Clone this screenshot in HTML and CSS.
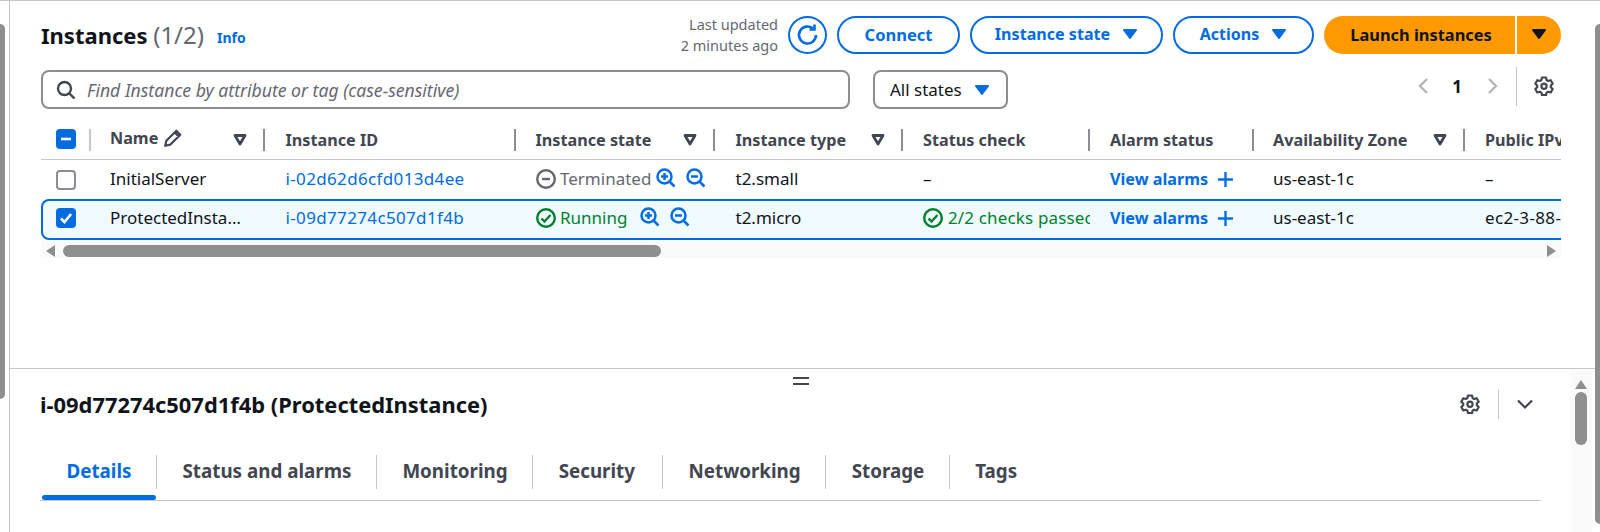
FILE: index.html
```html
<!DOCTYPE html>
<html>
<head>
  <title>Instances</title>
  <link rel="stylesheet" href="styles.css">
</head>
<body>
  <svg class="sprite" width="0" height="0">
    <symbol id="caret" viewBox="0 0 16 16"><path d="M2 4h12L8 12z" fill="currentColor" stroke="currentColor" stroke-width="2" stroke-linejoin="round"/></symbol>
    <symbol id="filter" viewBox="0 0 16 16"><path d="M3 3.5h10L8 12z" fill="none" stroke="currentColor" stroke-width="2.8" stroke-linejoin="round"/></symbol>
    <symbol id="zoom-in" viewBox="0 0 20 20" fill="none" stroke="currentColor" stroke-width="2.5"><circle cx="8.5" cy="8.5" r="7"/><path d="M13.5 13.5l5 5M5 8.5h7M8.5 5v7"/></symbol>
    <symbol id="zoom-out" viewBox="0 0 20 20" fill="none" stroke="currentColor" stroke-width="2.5"><circle cx="8.5" cy="8.5" r="7"/><path d="M13.5 13.5l5 5M5 8.5h7"/></symbol>
    <symbol id="ok" viewBox="0 0 20 20" fill="none" stroke="currentColor" stroke-width="2.4"><circle cx="10" cy="10" r="8.8"/><path d="M5.5 10.5l3 3 6-6.5"/></symbol>
    <symbol id="stopped" viewBox="0 0 20 20" fill="none" stroke="currentColor" stroke-width="2.4"><circle cx="10" cy="10" r="8.8"/><path d="M6 10h8"/></symbol>
    <symbol id="gear" viewBox="0 0 20 20" fill="none" stroke="currentColor" stroke-width="2.2" stroke-linejoin="round"><path d="M8 1.5h4l.6 2.6 1.5.9 2.6-.8 2 3.5-1.9 1.8v1.7l1.9 1.8-2 3.5-2.6-.8-1.5.9-.6 2.6H8l-.6-2.6-1.5-.9-2.6.8-2-3.5 1.9-1.8V9.5L1.3 7.7l2-3.5 2.6.8 1.5-.9z"/><circle cx="10" cy="10.3" r="2.6"/></symbol>
  </svg>

  <div class="layout">
    <div class="scroll-left"><div class="thumb-left"></div></div>

    <div class="main">
      <div class="instances">
        <div class="toolbar">
          <h1 class="title">Instances <span class="count">(1/2)</span></h1>
          <a class="info">Info</a>
          <div class="updated">Last updated<br>2 minutes ago</div>
          <button class="btn btn-icon">
            <svg width="24" height="24" viewBox="0 0 24 24" fill="none" stroke="currentColor" stroke-width="2.6"><path d="M20 12a8.5 8.5 0 1 1-3-6.5"/><path d="M18.5 1.5v5h-5"/></svg>
          </button>
          <button class="btn btn-connect">Connect</button>
          <button class="btn btn-state">Instance state <svg class="caret" width="16" height="16"><use href="#caret"/></svg></button>
          <button class="btn btn-actions">Actions <svg class="caret" width="16" height="16"><use href="#caret"/></svg></button>
          <div class="launch">
            <button class="launch-main">Launch instances</button>
            <button class="launch-more"><svg width="16" height="16"><use href="#caret"/></svg></button>
          </div>
        </div>

        <div class="filters">
          <div class="search">
            <svg width="20" height="20" viewBox="0 0 20 20" fill="none" stroke="currentColor" stroke-width="2.4"><circle cx="8.5" cy="8.5" r="6.5"/><path d="M13.3 13.3l5.2 5.2"/></svg>
            <span>Find Instance by attribute or tag (case-sensitive)</span>
          </div>
          <div class="state-select">All states <svg class="caret" width="16" height="16"><use href="#caret"/></svg></div>
          <div class="pager">
            <svg width="12" height="18" viewBox="0 0 12 18" fill="none" stroke="currentColor" stroke-width="2.4"><path d="M10 2L3 9l7 7"/></svg>
            <span class="page-num">1</span>
            <svg width="12" height="18" viewBox="0 0 12 18" fill="none" stroke="currentColor" stroke-width="2.4"><path d="M2 2l7 7-7 7"/></svg>
            <div class="pager-sep"></div>
            <svg class="pager-gear" width="20" height="20"><use href="#gear"/></svg>
          </div>
        </div>

        <div class="table">
          <div class="row row-head">
            <div class="cell cell-check"><span class="check check-on">
              <svg width="20" height="20" viewBox="0 0 20 20"><path d="M5 10h10" stroke="#fff" stroke-width="2.6"/></svg></span><i class="sep sep-light"></i></div>
            <div class="cell"><span class="name-head">Name <svg width="20" height="20" viewBox="0 0 18 18" fill="none" stroke="currentColor" stroke-width="2" stroke-linejoin="round"><path d="M2 16l1-4.5L12 2.5l3.5 3.5-9 9zM10.5 4l3.5 3.5"/></svg></span><svg class="filter" width="16" height="16"><use href="#filter"/></svg><i class="sep"></i></div>
            <div class="cell">Instance ID<i class="sep"></i></div>
            <div class="cell">Instance state<svg class="filter" width="16" height="16"><use href="#filter"/></svg><i class="sep"></i></div>
            <div class="cell">Instance type<svg class="filter" width="16" height="16"><use href="#filter"/></svg><i class="sep"></i></div>
            <div class="cell">Status check<i class="sep"></i></div>
            <div class="cell">Alarm status<i class="sep"></i></div>
            <div class="cell">Availability Zone<svg class="filter" width="16" height="16"><use href="#filter"/></svg><i class="sep"></i></div>
            <div class="cell">Public IPv4 DNS</div>
          </div>

          <div class="row row-body row-first">
            <div class="cell cell-check"><span class="check"></span></div>
            <div class="cell">InitialServer</div>
            <div class="cell"><a class="link">i-02d62d6cfd013d4ee</a></div>
            <div class="cell status-off">
              <svg class="status-icon" width="20" height="20"><use href="#stopped"/></svg>Terminated
              <svg class="zoom zoom-tight" width="20" height="20"><use href="#zoom-in"/></svg><svg class="zoom" width="20" height="20"><use href="#zoom-out"/></svg>
            </div>
            <div class="cell">t2.small</div>
            <div class="cell">–</div>
            <div class="cell"><a class="alarms">View alarms <svg width="17" height="17" viewBox="0 0 16 16" stroke="currentColor" stroke-width="2.2"><path d="M8 1v14M1 8h14"/></svg></a></div>
            <div class="cell">us-east-1c</div>
            <div class="cell">–</div>
          </div>

          <div class="row row-body row-selected">
            <div class="cell cell-check"><span class="check check-on">
              <svg width="20" height="20" viewBox="0 0 20 20" fill="none"><path d="M5 10.5l3.5 3.5 6.5-8" stroke="#fff" stroke-width="2.6"/></svg></span></div>
            <div class="cell"><span class="truncate">ProtectedInstance</span></div>
            <div class="cell"><a class="link">i-09d77274c507d1f4b</a></div>
            <div class="cell status-ok">
              <svg class="status-icon" width="20" height="20"><use href="#ok"/></svg>Running
              <svg class="zoom zoom-wide" width="20" height="20"><use href="#zoom-in"/></svg><svg class="zoom" width="20" height="20"><use href="#zoom-out"/></svg>
            </div>
            <div class="cell">t2.micro</div>
            <div class="cell status-ok cell-clip">
              <svg class="status-icon" width="20" height="20"><use href="#ok"/></svg>2/2 checks passed
            </div>
            <div class="cell"><a class="alarms">View alarms <svg width="17" height="17" viewBox="0 0 16 16" stroke="currentColor" stroke-width="2.2"><path d="M8 1v14M1 8h14"/></svg></a></div>
            <div class="cell">us-east-1c</div>
            <div class="cell dns">ec2-3-88-101-42.compute-1.amazonaws.com</div>
          </div>
        </div>

        <div class="hscroll">
          <span class="arrow-left"></span>
          <div class="hscroll-thumb"></div>
          <span class="arrow-right"></span>
        </div>
      </div>

      <div class="details">
        <div class="details-body">
          <div class="grip"></div>
          <div class="details-head">
            <h2 class="details-title">i-09d77274c507d1f4b (ProtectedInstance)</h2>
            <svg class="details-gear" width="20" height="20"><use href="#gear"/></svg>
            <div class="details-sep"></div>
            <svg class="details-chevron" width="18" height="18" viewBox="0 0 18 18" fill="none" stroke="currentColor" stroke-width="2.2"><path d="M2 5.5l7 7 7-7"/></svg>
          </div>
          <div class="tabs">
            <div class="tab tab-active">Details</div>
            <div class="tab">Status and alarms</div>
            <div class="tab">Monitoring</div>
            <div class="tab tab-wide">Security</div>
            <div class="tab">Networking</div>
            <div class="tab">Storage</div>
            <div class="tab tab-last">Tags</div>
          </div>
        </div>
        <div class="details-scroll">
          <span class="arrow-up"></span>
          <div class="details-thumb"></div>
        </div>
      </div>
    </div>

    <div class="scroll-right"><div class="thumb-right"></div></div>
  </div>
</body>
</html>
```

FILE: styles.css
```css
* {
  box-sizing: border-box;
}

html, body {
  margin: 0;
  height: 100%;
  overflow: hidden;
}

body {
  font-family: "Noto Sans", sans-serif;
  font-size: 17px;
  color: #0f141a;
  background: #fff;
}

.sprite {
  display: block;
  height: 0;
}

.layout {
  display: flex;
  height: 532px;
  border-top: 1px solid #c6c6cd;
}

/* page scrollbars */
.scroll-left {
  width: 10px;
  padding-top: 23px;
  border-right: 1px solid #c6c6cd;
}

.thumb-left {
  width: 5px;
  height: 375px;
  background: #8f8f8f;
  border-radius: 0 5px 5px 0;
}

.scroll-right {
  width: 5px;
  padding-top: 23px;
}

.thumb-right {
  height: 500px;
  background: #8f8f8f;
  border-radius: 5px 0 0 5px;
}

.main {
  flex: 1;
  min-width: 0;
}

/* top panel */
.instances {
  height: 368px;
  padding: 15px 34px 0 31px;
  border-bottom: 1px solid #c6c6cd;
}

.toolbar {
  display: flex;
  align-items: center;
  height: 38px;
}

.title {
  margin: 0 0 2px;
  font-size: 22px;
  font-weight: 700;
}

.count {
  font-size: 24px;
  font-weight: 400;
  color: #656871;
}

.info {
  margin: 5px 0 0 13px;
  font-size: 14px;
  font-weight: 700;
  color: #006ce0;
}

.updated {
  margin-left: auto;
  font-size: 14.5px;
  line-height: 21px;
  text-align: right;
  color: #656871;
}

.btn {
  display: flex;
  align-items: center;
  justify-content: center;
  gap: 12px;
  height: 38px;
  margin-left: 10px;
  padding: 0 0 2px;
  border: 2px solid #006ce0;
  border-radius: 20px;
  background: #fff;
  font: 700 16.5px "Noto Sans", sans-serif;
  color: #006ce0;
}

.btn-icon {
  width: 39px;
  margin-left: 10px;
  padding: 0;
  border-radius: 50%;
}

.btn-connect {
  width: 123px;
}

.btn-state {
  width: 193px;
  font-size: 16.1px;
}

.btn-actions {
  width: 141px;
  font-size: 16px;
}

.launch {
  display: flex;
  gap: 2px;
  height: 38px;
  margin-left: 10px;
}

.launch button {
  border: 0;
  padding: 0 0 2px;
  background: #f90;
  font: 700 16.4px "Noto Sans", sans-serif;
  color: #0f141a;
}

.launch-main {
  width: 191px;
  border-radius: 20px 0 0 20px;
  text-indent: 3px;
}

.launch-more {
  display: flex;
  align-items: center;
  justify-content: center;
  width: 44px;
  border-radius: 0 20px 20px 0;
}

.caret {
  color: #006ce0;
}

/* filter row */
.filters {
  display: flex;
  align-items: center;
  margin-top: 16px;
}

.search {
  display: flex;
  align-items: center;
  gap: 11px;
  width: 809px;
  height: 39px;
  padding-left: 13px;
  border: 2px solid #8c8c94;
  border-radius: 8px;
  font-size: 17.6px;
  font-style: italic;
  color: #656871;
}

.search svg {
  color: #424650;
}

.state-select {
  display: flex;
  align-items: center;
  gap: 12px;
  width: 135px;
  height: 39px;
  margin-left: 23px;
  padding-left: 15px;
  border: 2px solid #8c8c94;
  border-radius: 8px;
}

.pager {
  display: flex;
  align-items: center;
  margin-left: auto;
  margin-right: 7px;
  margin-top: -7px;
  color: #b4b4bb;
}

.page-num {
  width: 58px;
  padding-right: 2px;
  text-align: center;
  font-weight: 700;
  color: #0f141a;
}

.pager-sep {
  width: 1px;
  height: 39px;
  margin: 0 17px 0 17px;
  background: #c6c6cd;
}

.pager-gear {
  color: #424650;
}

/* table */
.table {
  width: 1520px;
  margin-top: 11px;
  overflow: hidden;
}

.row {
  display: grid;
  grid-template-columns: 50px 174px 251px 199px 188px 187px 164px 211px 400px;
  width: 1624px;
  align-items: center;
}

.row-head {
  height: 40px;
  border-bottom: 1px solid #c6c6cd;
  font-size: 16.2px;
  font-weight: 700;
  color: #424650;
}

.row-head .check {
  margin-bottom: 2px;
}

.row-first {
  height: 39px;
  padding-bottom: 3px;
}

.row-first .check {
  margin-top: 3px;
}

.row-selected {
  height: 41px;
  padding-bottom: 5px;
  background: #f0fbff;
  border-radius: 8px;
  box-shadow: inset 0 0 0 2px #006ce0;
}

.row-selected .check {
  margin-top: 2px;
}

.cell {
  display: flex;
  align-items: center;
  min-width: 0;
  padding-left: 20px;
  white-space: nowrap;
}

.cell:nth-child(2) {
  padding-left: 19px;
}

.cell:nth-child(3), .cell:nth-child(5) {
  padding-left: 20.5px;
}

.cell:nth-child(4) {
  padding-left: 19.5px;
}

.cell:nth-child(8) {
  padding-left: 19px;
}

.cell-check {
  padding-left: 15px;
}

.check {
  display: block;
  width: 20px;
  height: 20px;
  border: 2px solid #8c8c94;
  border-radius: 4px;
  background: #fff;
}

.check-on {
  border: 0;
  background: #006ce0;
}

.check svg {
  display: block;
}

.sep {
  width: 2px;
  height: 22px;
  margin-left: auto;
  background: #8c8c94;
}

.sep-light {
  background: #c6c6cd;
}

.filter {
  margin-left: auto;
  margin-right: 15px;
}

.filter + .sep {
  margin-left: 0;
}

.name-head {
  display: flex;
  align-items: center;
  gap: 5px;
  margin-top: -4px;
}

.link {
  letter-spacing: .35px;
  color: #006ce0;
}

.dns {
  letter-spacing: .35px;
}

.truncate {
  width: 136px;
  overflow: hidden;
  text-overflow: ellipsis;
}

.status-icon {
  flex: none;
  margin-top: 2px;
  margin-right: 4.5px;
}

.status-off {
  color: #656871;
}

.status-ok {
  color: #00802f;
}

.zoom {
  flex: none;
  margin-left: 10px;
  margin-top: -1px;
  color: #006ce0;
}

.zoom-tight {
  margin-left: 5px;
}

.zoom-wide {
  margin-left: 13px;
}

.cell-clip {
  overflow: hidden;
  letter-spacing: .15px;
}

.cell-clip .status-icon {
  margin-right: 5px;
}

.alarms {
  display: flex;
  align-items: center;
  gap: 9px;
  margin-top: 2px;
  font-size: 16.2px;
  font-weight: 700;
  color: #006ce0;
}

/* horizontal scrollbar under the table */
.hscroll {
  display: flex;
  align-items: center;
  width: 1520px;
  height: 18px;
  padding-top: 3px;
  background: #fafafa;
}

.arrow-left {
  width: 0;
  height: 0;
  margin-left: 5px;
  border: 6px solid transparent;
  border-left: 0;
  border-right: 9px solid #8f8f8f;
}

.hscroll-thumb {
  width: 598px;
  height: 12px;
  margin-left: 8px;
  border-radius: 6px;
  background: #8f8f8f;
}

.arrow-right {
  width: 0;
  height: 0;
  margin-left: auto;
  margin-right: 5px;
  border: 6px solid transparent;
  border-right: 0;
  border-left: 9px solid #8f8f8f;
}

/* bottom panel */
.details {
  display: flex;
  height: 163px;
}

.details-body {
  width: 1560px;
  padding-left: 30px;
  padding-right: 29px;
}

.grip {
  width: 16px;
  height: 8px;
  margin: 8px 0 0 753px;
  border-top: 2px solid #424650;
  border-bottom: 2px solid #424650;
}

.details-head {
  display: flex;
  align-items: center;
  height: 30px;
  margin-top: 4px;
}

.details-title {
  margin: 0;
  font-size: 21.9px;
  font-weight: 700;
}

.details-gear {
  margin-left: auto;
  color: #424650;
}

.details-sep {
  width: 1px;
  height: 29px;
  margin: 0 17px 0 18px;
  background: #c6c6cd;
}

.details-chevron {
  margin-right: 7px;
  color: #424650;
}

.tabs {
  display: flex;
  margin-top: 36px;
  height: 46px;
  padding-left: 1px;
  border-bottom: 1px solid #c6c6cd;
}

.tab {
  height: 34px;
  padding: 0 24.5px 0 25.5px;
  border-right: 1px solid #c6c6cd;
  font-size: 18.8px;
  font-weight: 700;
  line-height: 32px;
  color: #424650;
}

.tab-wide {
  padding-right: 27px;
}

.tab-last {
  border-right: 0;
}

.tab-active {
  position: relative;
  color: #006ce0;
}

.tab-active::after {
  content: "";
  position: absolute;
  left: 1px;
  right: 0;
  top: 40px;
  height: 5px;
  background: #006ce0;
  border-radius: 3px;
}

.details-scroll {
  display: flex;
  flex-direction: column;
  align-items: center;
  width: 22px;
  padding-top: 11px;
  background: #fafafa;
}

.arrow-up {
  width: 0;
  height: 0;
  border: 6px solid transparent;
  border-top: 0;
  border-bottom: 9px solid #8f8f8f;
}

.details-thumb {
  width: 12px;
  height: 53px;
  margin-top: 3px;
  border-radius: 6px;
  background: #8f8f8f;
}
```
